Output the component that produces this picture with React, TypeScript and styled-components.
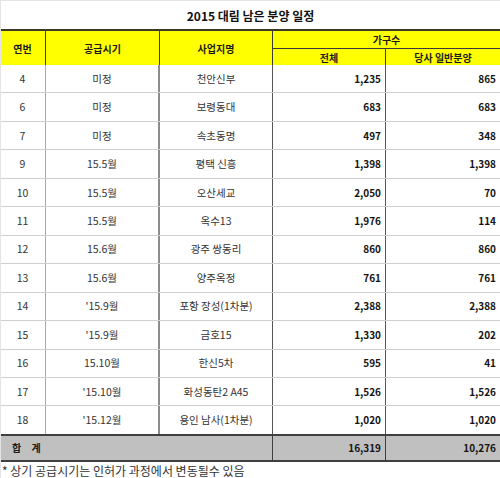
import React from "react";
import styled, { createGlobalStyle } from "styled-components";

const GlobalStyle = createGlobalStyle`
  html, body {
    margin: 0;
    padding: 0;
    background: #ffffff;
  }
  body {
    font-family: "Noto Sans CJK KR", "Noto Sans", sans-serif;
    color: #222;
  }
`;

const COLS = "46px 114px 113px 113px 114px";

type Supply = {
  no: number;
  when: string;
  site: string;
  total: string;
  general: string;
};

const rows: Supply[] = [
  { no: 4, when: "미정", site: "천안신부", total: "1,235", general: "865" },
  { no: 6, when: "미정", site: "보령동대", total: "683", general: "683" },
  { no: 7, when: "미정", site: "속초동명", total: "497", general: "348" },
  { no: 9, when: "15.5월", site: "평택 신흥", total: "1,398", general: "1,398" },
  { no: 10, when: "15.5월", site: "오산세교", total: "2,050", general: "70" },
  { no: 11, when: "15.5월", site: "옥수13", total: "1,976", general: "114" },
  { no: 12, when: "15.6월", site: "광주 쌍동리", total: "860", general: "860" },
  { no: 13, when: "15.6월", site: "양주옥정", total: "761", general: "761" },
  { no: 14, when: "'15.9월", site: "포항 장성(1차분)", total: "2,388", general: "2,388" },
  { no: 15, when: "'15.9월", site: "금호15", total: "1,330", general: "202" },
  { no: 16, when: "15.10월", site: "한신5차", total: "595", general: "41" },
  { no: 17, when: "'15.10월", site: "화성동탄2 A45", total: "1,526", general: "1,526" },
  { no: 18, when: "'15.12월", site: "용인 남사(1차분)", total: "1,020", general: "1,020" },
];

const Sheet = styled.div`
  width: 500px;
  height: 478px;
  overflow: hidden;
  box-sizing: border-box;
  border-top: 1px solid #e4e4e4;
  border-left: 1px solid #e4e4e4;
`;

const Title = styled.div`
  height: 27px;
  display: flex;
  align-items: center;
  justify-content: center;
  font-size: 12px;
  font-weight: 700;
  color: #111;
  padding-top: 1px;
`;

const Header = styled.div`
  display: grid;
  grid-template-columns: ${COLS};
  grid-template-rows: 18px 16px;
  background: #ffff00;
  border-top: 2px solid #3a3a2a;
  margin-left: -1px;
`;

const HeadCell = styled.div<{ $col: string; $row: string; $line?: boolean; $under?: boolean }>`
  grid-column: ${(p) => p.$col};
  grid-row: ${(p) => p.$row};
  display: flex;
  align-items: center;
  justify-content: center;
  font-size: 10px;
  font-weight: 700;
  color: #1a1a1a;
  box-sizing: border-box;
  border-right: ${(p) => (p.$line ? "1px solid #3a3a3a" : "none")};
  border-bottom: ${(p) => (p.$under ? "1px solid #3a3a3a" : "none")};
`;

const Row = styled.div<{ $h: number }>`
  display: grid;
  grid-template-columns: ${COLS};
  height: ${(p) => p.$h}px;
  box-sizing: border-box;
  border-bottom: 1px solid #cfcfcf;
  margin-left: -1px;
`;

const Cell = styled.div<{ $line: string; $w?: number }>`
  display: flex;
  align-items: center;
  justify-content: center;
  font-size: 10.5px;
  color: #333;
  box-sizing: border-box;
  border-right: ${(p) => p.$w ?? 1}px solid ${(p) => p.$line};
  padding-bottom: 1px;
`;

const NumCell = styled(Cell)`
  justify-content: flex-end;
  padding-right: 4px;
  font-size: 10px;
  font-weight: 700;
  color: #141414;
`;

const TotalRow = styled.div`
  display: grid;
  grid-template-columns: 273px 113px 114px;
  height: 28px;
  box-sizing: border-box;
  background: #c0c0c0;
  border-top: 2px solid #404040;
  border-bottom: 2px solid #404040;
  margin-left: -1px;
  margin-top: -1px;
`;

const TotalLabel = styled.div`
  display: flex;
  align-items: center;
  padding-left: 12px;
  font-size: 10px;
  font-weight: 700;
  color: #1a1a1a;
  word-spacing: 8px;
  border-right: 1px solid #404040;
`;

const TotalNum = styled.div<{ $line?: boolean }>`
  display: flex;
  align-items: center;
  justify-content: flex-end;
  padding-right: 4px;
  font-size: 10px;
  font-weight: 700;
  color: #141414;
  border-right: ${(p) => (p.$line ? "1px solid #404040" : "none")};
`;

const Note = styled.div`
  height: 18px;
  display: flex;
  align-items: center;
  padding-left: 1px;
  font-size: 12px;
  color: #333;
`;

const ROW_H = 370 / 13;

export default function App() {
  return (
    <>
      <GlobalStyle />
      <Sheet>
        <Title>2015 대림 남은 분양 일정</Title>
        <Header>
          <HeadCell $col="1" $row="1 / 3" $line>연번</HeadCell>
          <HeadCell $col="2" $row="1 / 3" $line>공급시기</HeadCell>
          <HeadCell $col="3" $row="1 / 3" $line>사업지명</HeadCell>
          <HeadCell $col="4 / 6" $row="1" $under>가구수</HeadCell>
          <HeadCell $col="4" $row="2" $line>전체</HeadCell>
          <HeadCell $col="5" $row="2">당사 일반분양</HeadCell>
        </Header>
        {rows.map((r) => (
          <Row key={r.no} $h={ROW_H}>
            <Cell $line="#a8a8a8">{r.no}</Cell>
            <Cell $line="#8c8c8c" $w={2}>{r.when}</Cell>
            <Cell $line="#555">{r.site}</Cell>
            <NumCell $line="#555">{r.total}</NumCell>
            <NumCell $line="transparent" $w={0}>{r.general}</NumCell>
          </Row>
        ))}
        <TotalRow>
          <TotalLabel>합 계</TotalLabel>
          <TotalNum $line>16,319</TotalNum>
          <TotalNum>10,276</TotalNum>
        </TotalRow>
        <Note>* 상기 공급시기는 인허가 과정에서 변동될수 있음</Note>
      </Sheet>
    </>
  );
}
